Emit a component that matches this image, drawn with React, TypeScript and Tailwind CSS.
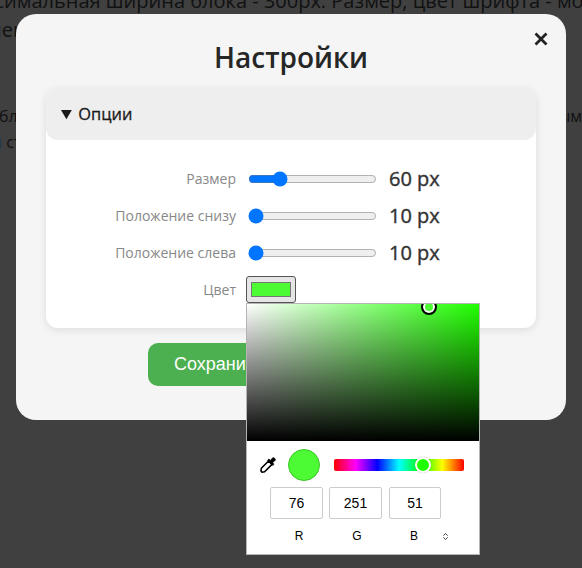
import { ChevronsUpDown } from "lucide-react";

const rows = [
  { label: "Размер", value: 60 },
  { label: "Положение снизу", value: 10 },
  { label: "Положение слева", value: 10 },
];

function Picker() {
  return (
    <div className="absolute left-[200px] top-[215px] z-10 w-[234px] h-[252px] bg-white border border-[#b5b5b5] flex flex-col font-['Liberation_Sans',sans-serif]">
      <div className="relative h-[137px] bg-[linear-gradient(to_top,#000,transparent),linear-gradient(to_right,#fff,#20ff00)] overflow-hidden">
        <div className="absolute left-[174px] top-[-5px] w-4 h-4 rounded-full border-[2px] border-black bg-[#4cfb33] shadow-[inset_0_0_0_2px_#fff]" />
      </div>
      <div className="flex items-center pl-[13px] pt-[8px]">
        <svg width="16" height="16" viewBox="0 0 16 16" className="shrink-0">
          <path d="M8.6 4 L12 7.4 L4.6 14.8 L2 15.2 L1 14 L1.3 11.3 Z" fill="#fff" stroke="#000" strokeWidth="1.6" strokeLinejoin="round" />
          <path d="M7.6 3.2 L12.8 8.4 L14 7.2 L12.6 5.8 L15 3.4 C16.2 2.2 13.8 -0.2 12.6 1 L10.2 3.4 L8.8 2 Z" fill="#000" stroke="#000" strokeWidth="0.8" />
        </svg>
        <div className="ml-[12px] w-8 h-8 rounded-full bg-[#4cfb33] border border-[#3fc52c]" />
        <div className="relative ml-[14px] w-[130px] h-3 rounded-[2px] bg-[linear-gradient(to_right,#f00,#f0f,#00f,#0ff,#0f0,#ff0,#f00)]">
          <div className="absolute left-[81px] top-[-2px] w-4 h-4 rounded-full bg-[#20ff00] border-[2px] border-white shadow-[0_0_1px_rgba(0,0,0,.4)]" />
        </div>
      </div>
      <div className="flex pl-[23px] pt-[6px] gap-[6px]">
        {["76", "251", "51"].map((v, i) => (
          <div
            key={v}
            className={`${i === 1 ? "w-[53px] mr-[1px]" : i === 0 ? "w-[53px]" : "w-[52px]"} h-[32px] border border-[#cccccc] rounded-[2px] flex items-center justify-center text-[14px] text-black`}
          >
            {v}
          </div>
        ))}
      </div>
      <div className="flex items-center pl-[23px] pt-[10px] text-[12px] text-black leading-[14px]">
        <span className="w-[58px] text-center">R</span>
        <span className="w-[58px] text-center">G</span>
        <span className="w-[56px] text-center">B</span>
        <ChevronsUpDown size={9} strokeWidth={2} className="ml-[-1px] text-black" />
      </div>
    </div>
  );
}

export default function App() {
  return (
    <div className="relative w-[582px] h-[568px] overflow-hidden bg-[#404040] font-['Open_Sans',sans-serif] text-[#111]">
      <div className="whitespace-nowrap mt-[-13px]">
        <p className="text-[20px] leading-[28px] ml-[-45px]">Максимальная ширина блока - 300рх. Размер, цвет шрифта - можно</p>
        <p className="text-[20px] leading-[29px] ml-[-13px]">менять</p>
        <div className="mt-[59px] text-[16px] leading-[26px] ml-[-32px] w-[614px] flex justify-between">
          <span>Проблема</span>
          <span>необязательным</span>
        </div>
        <p className="text-[16px] leading-[26px] ml-[-8px]"><span className="text-[#1e3a5f]">и</span> стилями</p>
      </div>

      <div className="absolute left-4 top-[14px] w-[550px] h-[406px] bg-[#f5f5f5] rounded-[20px] px-[30px] pt-[24px] flex flex-col items-center">
        <svg width="14" height="14" viewBox="0 0 14 14" className="absolute right-[18px] top-[18px]">
          <path d="M1.5 1.5 L12.5 12.5 M12.5 1.5 L1.5 12.5" stroke="#222" strokeWidth="2.8" />
        </svg>
        <h2 className="text-[28px] leading-[38px] font-semibold text-[#262626]">Настройки</h2>
        <details open className="relative mt-[12px] w-[490px] h-[240px] bg-white rounded-[12px] shadow-[0_2px_8px_rgba(0,0,0,0.1)]">
          <summary className="h-[52px] bg-[#eeeeee] rounded-[12px] pl-[15px] text-[16.4px] leading-[52px] text-[#1a1a1a] [-webkit-text-stroke:0.3px_#1a1a1a]">
            Опции
          </summary>
          <div className="pt-[27px] flex flex-col gap-[14px]">
            {rows.map((r) => (
              <div key={r.label} className="flex items-center h-[23px]">
                <span className="w-[190px] text-right text-[14px] text-[#888888]">{r.label}</span>
                <input type="range" min={10} max={250} defaultValue={r.value} className="ml-[12px] mr-[12px]" />
                <span className="text-[20px] text-[#333333] [-webkit-text-stroke:0.4px_#333333]">{r.value} px</span>
              </div>
            ))}
            <div className="flex items-center h-[23px]">
              <span className="w-[190px] text-right text-[14px] text-[#888888]">Цвет</span>
              <div className="ml-[10px] w-[50px] h-[27px] bg-[#e5e5e5] border border-[#555555] rounded-[3px] flex items-center justify-center">
                <div className="w-10 h-[15px] bg-[#4cfb33] border border-[#777777]" />
              </div>
            </div>
          </div>
          <Picker />
        </details>
        <button className="mt-[15px] w-[286px] h-[43px] bg-[#4caf50] rounded-[10px] pl-[26px] text-left text-white text-[18px] font-['Liberation_Sans',sans-serif]">
          Сохранить настройки
        </button>
      </div>
    </div>
  );
}
